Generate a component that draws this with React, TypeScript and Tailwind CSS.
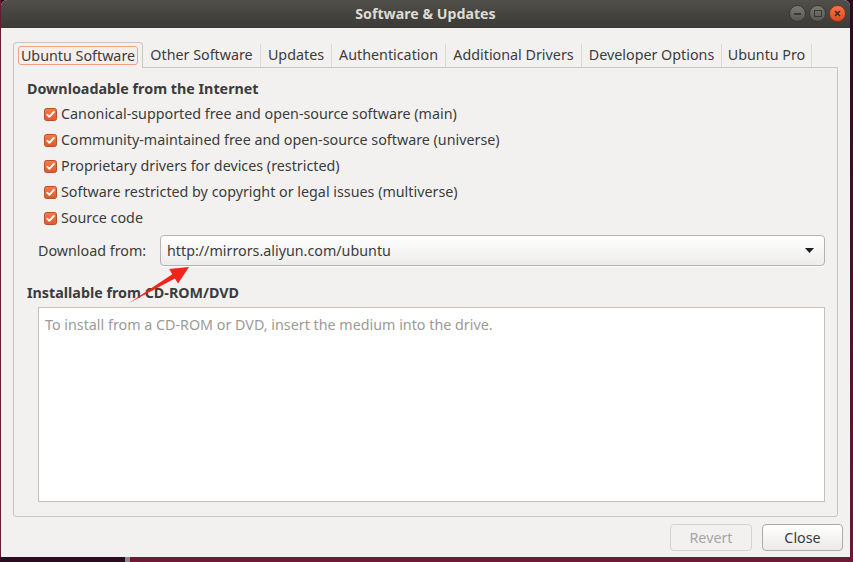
import React from 'react';

const tabs = [
  { label: 'Ubuntu Software', w: 'w-[130px]' },
  { label: 'Other Software', w: 'w-[118px]' },
  { label: 'Updates', w: 'w-[71px]' },
  { label: 'Authentication', w: 'w-[114px]' },
  { label: 'Additional Drivers', w: 'w-[136px]' },
  { label: 'Developer Options', w: 'w-[140px]' },
  { label: 'Ubuntu Pro', w: 'w-[90px]' },
];

const sources = [
  'Canonical-supported free and open-source software (main)',
  'Community-maintained free and open-source software (universe)',
  'Proprietary drivers for devices (restricted)',
  'Software restricted by copyright or legal issues (multiverse)',
  'Source code',
];

const CheckBox: React.FC = () => (
  <svg width="13" height="13" viewBox="0 0 13 13" className="shrink-0">
    <defs>
      <linearGradient id="cb" x1="0" y1="0" x2="0" y2="1">
        <stop offset="0" stopColor="#f27d4c" />
        <stop offset="1" stopColor="#dc5a2b" />
      </linearGradient>
    </defs>
    <rect x="0.5" y="0.5" width="12" height="12" rx="2" fill="url(#cb)" stroke="#b9502a" />
    <path d="M3.2 6.6 L5.4 8.9 L9.9 3.9" fill="none" stroke="#fff" strokeWidth="1.8" strokeLinecap="round" strokeLinejoin="round" />
  </svg>
);

const App: React.FC = () => {
  return (
    <div className="relative w-[853px] h-[562px] overflow-hidden bg-gradient-to-b from-[#2a0a20] via-[#2c0a22] to-[#5e1530] font-['Noto_Sans',sans-serif] text-[14.3px] text-[#3c3c3c]">
      <div className="flex flex-col h-full">
        <div className="flex">
          <div className="w-[1px] h-[557px] bg-[#6a1a34]" />
          {/* window */}
          <div className="w-[849px] h-[557px] flex flex-col bg-[#f2f1f0] rounded-t-[6px] overflow-hidden">
            <div className="relative h-[28px] shrink-0 bg-gradient-to-b from-[#504f4a] to-[#3b3a36] flex items-center justify-center">
              <span className="font-bold text-[14.2px] text-[#dfdbd2] leading-none">Software &amp; Updates</span>
              <div className="absolute right-[4px] top-[5px] flex gap-[3px]">
                <div className="w-[17px] h-[17px] rounded-full bg-gradient-to-b from-[#7b7a75] to-[#57564f] border border-[#393833] flex items-center justify-center">
                  <div className="w-[7px] h-[2px] bg-[#3a3935]" />
                </div>
                <div className="w-[17px] h-[17px] rounded-full bg-gradient-to-b from-[#7b7a75] to-[#57564f] border border-[#393833] flex items-center justify-center">
                  <div className="w-[8px] h-[7px] border-[1.5px] border-[#3a3935]" />
                </div>
                <div className="w-[17px] h-[17px] rounded-full bg-gradient-to-b from-[#f47548] to-[#dd4b1c] border border-[#8a3517] flex items-center justify-center">
                  <svg width="7" height="7" viewBox="0 0 7 7">
                    <path d="M1 1 L6 6 M6 1 L1 6" stroke="#3a2a24" strokeWidth="1.5" />
                  </svg>
                </div>
              </div>
            </div>

            <div className="flex-1 flex flex-col pt-[14px] pl-[12px] pr-[12px]">
              {/* tabs */}
              <div className="flex h-[25px]">
                {tabs.map((t, i) =>
                  i === 0 ? (
                    <div key={t.label} className={`${t.w} relative z-10 -mb-px h-[26px] bg-[#f2f1f0] border border-b-0 border-[#c9c5c0] rounded-t-[4px] flex items-center justify-center`}>
                      <span className="px-[2px] h-[19px] leading-[17px] border border-[#f0a286] rounded-[3px] bg-[#f6eeea]">{t.label}</span>
                    </div>
                  ) : (
                    <div key={t.label} className={`${t.w} h-[25px] flex items-center justify-center`}>
                      <span className="flex-1 text-center leading-[20px]">{t.label}</span>
                      <div className="w-[1px] h-[23px] mt-[2px] bg-[#dcd8d3]" />
                    </div>
                  ),
                )}
              </div>

              {/* panel */}
              <div className="w-[825px] h-[450px] border border-[#c9c5c0] rounded-b-[3px] pt-[12px] pl-[13px] flex flex-col">
                <div className="font-bold leading-[18px] h-[18px]">Downloadable from the Internet</div>
                <div className="mt-[3px] flex flex-col">
                  {sources.map(s => (
                    <div key={s} className="h-[26px] flex items-center pl-[17px] gap-[4px]">
                      <CheckBox />
                      <span className="leading-[18px]">{s}</span>
                    </div>
                  ))}
                </div>
                <div className="mt-[4px] flex items-center ml-[11px]">
                  <div className="w-[122px]">Download from:</div>
                  <div className="w-[665px] h-[31px] rounded-[4px] border border-[#b6b2ad] bg-gradient-to-b from-[#ffffff] to-[#ececeb] flex items-center pl-[6px] pr-[10px] shadow-[0_1px_0_rgba(255,255,255,0.8)]">
                    <span className="flex-1">http://mirrors.aliyun.com/ubuntu</span>
                    <svg width="9" height="5" viewBox="0 0 9 5">
                      <path d="M0 0 L9 0 L4.5 5 Z" fill="#1e1e1e" />
                    </svg>
                  </div>
                </div>
                <div className="mt-[18px] font-bold leading-[18px] h-[18px]">Installable from CD-ROM/DVD</div>
                <div className="mt-[5px] ml-[11px] w-[787px] h-[195px] bg-white border border-[#c4c0bb] pt-[6px] pl-[6px]">
                  <span className="text-[#9c9a97] leading-[20px]">To install from a CD-ROM or DVD, insert the medium into the drive.</span>
                </div>
              </div>

              {/* buttons */}
              <div className="mt-[7px] flex justify-end gap-[10px] mr-[-5px]">
                <div className="w-[82px] h-[27px] rounded-[4px] border border-[#d6d3cf] bg-[#f2f1f0] text-[#a8a6a3] flex items-center justify-center">Revert</div>
                <div className="w-[81px] h-[27px] rounded-[4px] border border-[#aeaaa5] bg-gradient-to-b from-[#ffffff] to-[#ebeae8] flex items-center justify-center">Close</div>
              </div>
            </div>
          </div>
          <div className="flex-1 h-[557px] bg-gradient-to-b from-[#2b0a21] to-[#6a1934]" />
        </div>
        <div className="flex h-[5px]">
          <div className="w-[125px] bg-[#2a0b20]" />
          <div className="w-[5px] bg-[#8a8a8a]" />
          <div className="flex-1 bg-[#6e1a36]" />
        </div>
      </div>

      {/* annotation arrow */}
      <svg className="absolute left-0 top-0 pointer-events-none" width="853" height="562" viewBox="0 0 853 562">
        <polygon points="129,303 174.9,278.4 178,283.6 189,267 169.2,269 172.3,274.2" fill="#f2231b" />
      </svg>
    </div>
  );
};

export default App;
